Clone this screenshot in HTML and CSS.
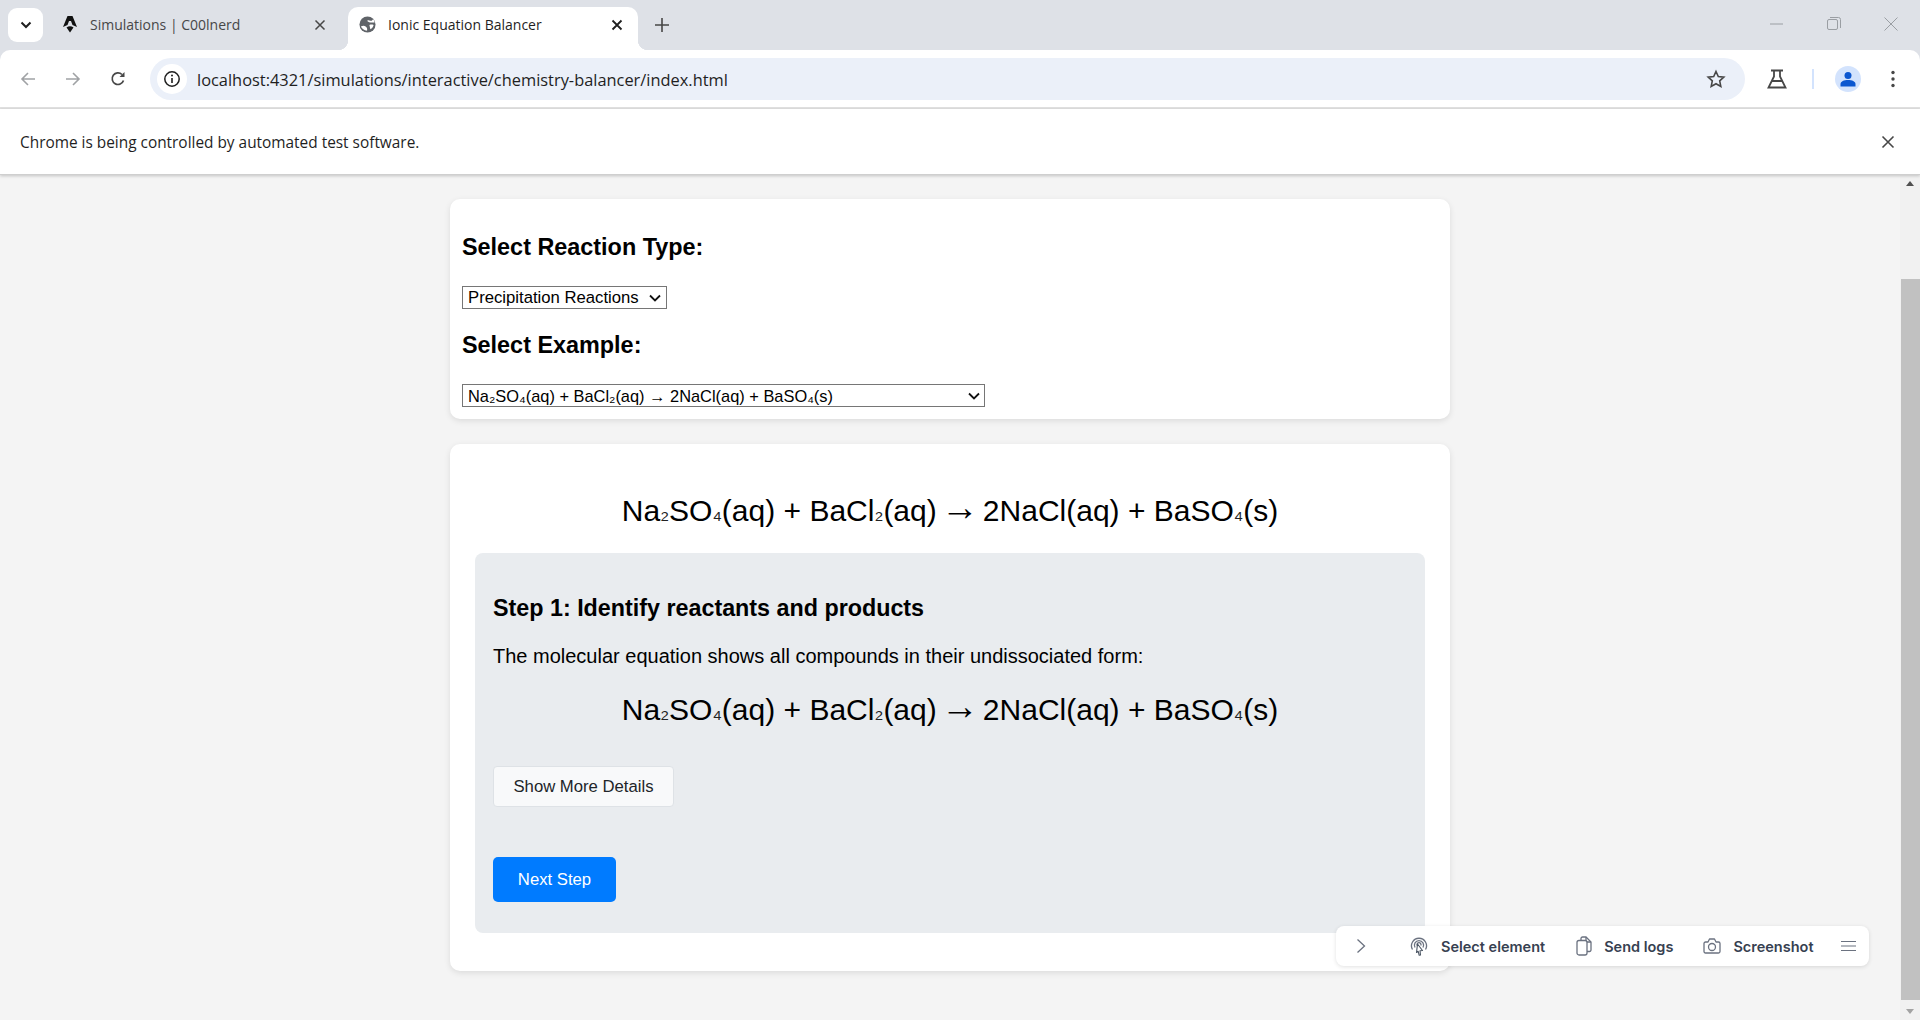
FILE: index.html
```html
<!DOCTYPE html>
<html lang="en">
<head>
  <meta charset="UTF-8">
  <title>Ionic Equation Balancer</title>
  <link rel="stylesheet" href="styles.css">
</head>
<body>
  <div class="tabstrip">
    <button class="tab-search">
      <svg width="12" height="12" viewBox="0 0 12 12"><path d="M1.500 3.500L6 8l4.500-4.500" fill="none" stroke="#1f1f1f" stroke-width="2"/></svg>
    </button>
    <div class="tab">
      <svg class="tab-icon" width="14" height="17" viewBox="0 0 14 17"><path d="M4.500 0h5L14 11 9.500 9l-1.500-4h-2L4.500 9 0 11z" fill="#111"/><path d="M3.500 11.500Q7 9 10.500 11.500L7 16.500z" fill="#111"/></svg>
      <span class="tab-title">Simulations | C00lnerd</span>
      <svg class="tab-close" width="12" height="12" viewBox="0 0 12 12"><path d="M1.500 1.500l9 9M10.500 1.500l-9 9" stroke="#474747" stroke-width="1.500"/></svg>
    </div>
    <div class="tab tab-active">
      <svg class="tab-icon" width="17" height="17" viewBox="0 0 18 18"><circle cx="9" cy="9" r="8.500" fill="#5f6368"/><path d="M9 4.500c2 0 3 1 4.500 .5l1.500-1.500c1 1 1.500 2.500 1.500 3.500H13c-1.500 0-3-.5-4-1.500zM2 11c2-1 3.500-1 5 0s2 2.500 1.500 4.500c-3-.5-5.500-2-6.500-4.500z" fill="#fff"/><path d="M11 9.500c1.500-.5 3-.5 4.500 0-.5 2-1.500 3.500-3.500 4.500z" fill="#fff"/></svg>
      <span class="tab-title">Ionic Equation Balancer</span>
      <svg class="tab-close" width="12" height="12" viewBox="0 0 12 12"><path d="M1.500 1.500l9 9M10.500 1.500l-9 9" stroke="#1f1f1f" stroke-width="1.800"/></svg>
    </div>
    <svg class="new-tab" width="14" height="14" viewBox="0 0 14 14"><path d="M7 0v14M0 7h14" stroke="#474747" stroke-width="1.600"/></svg>
    <div class="window-controls">
      <svg width="14" height="14" viewBox="0 0 14 14"><path d="M0 7h13" stroke="#9a9ea3" stroke-width="1"/></svg>
      <svg width="14" height="14" viewBox="0 0 14 14"><rect x="0.500" y="2.500" width="10" height="10" rx="1.500" fill="none" stroke="#9a9ea3"/><path d="M3 .5h8.500a2 2 0 0 1 2 2V11" fill="none" stroke="#9a9ea3"/></svg>
      <svg width="14" height="14" viewBox="0 0 14 14"><path d="M.5.500l13 13M13.500.500l-13 13" stroke="#9a9ea3" stroke-width="1"/></svg>
    </div>
  </div>

  <div class="toolbar">
    <svg class="nav-icon" width="16" height="16" viewBox="0 0 16 16"><path d="M15 8H2M8 2L2 8l6 6" fill="none" stroke="#a0a2a5" stroke-width="1.600"/></svg>
    <svg class="nav-icon" width="16" height="16" viewBox="0 0 16 16"><path d="M1 8h13M8 2l6 6-6 6" fill="none" stroke="#a0a2a5" stroke-width="1.600"/></svg>
    <svg class="nav-icon" width="16" height="16" viewBox="0 0 16 16"><path d="M13.500 9.500A5.800 5.800 0 1 1 12 3.500" fill="none" stroke="#474747" stroke-width="1.700"/><path d="M9.500 6H14.500V1z" fill="#474747"/></svg>
    <div class="omnibox">
      <span class="site-info">
        <svg width="18" height="18" viewBox="0 0 18 18"><circle cx="9" cy="9" r="7.200" fill="none" stroke="#1f1f1f" stroke-width="1.500"/><path d="M9 8v5" stroke="#1f1f1f" stroke-width="1.600"/><circle cx="9" cy="5.500" r="1" fill="#1f1f1f"/></svg>
      </span>
      <span class="url">localhost:4321/simulations/interactive/chemistry-balancer/index.html</span>
      <svg class="star" width="20" height="20" viewBox="0 0 20 20"><path d="M10 2.500l2.300 5.100 5.500.6-4.100 3.700 1.100 5.500L10 14.700l-4.800 2.700 1.100-5.500-4.100-3.700 5.500-.6z" fill="none" stroke="#474747" stroke-width="1.600"/></svg>
    </div>
    <svg class="flask" width="20" height="20" viewBox="0 0 20 20"><path d="M4 1.500h12M7 1.500v6L1.500 18.500h17L13 7.500v-6M5 12h10" fill="none" stroke="#474747" stroke-width="1.800"/></svg>
    <span class="toolbar-sep"></span>
    <span class="avatar">
      <svg width="16" height="16" viewBox="0 0 16 16"><circle cx="8" cy="4.500" r="3.500" fill="#0b57d0"/><path d="M.5 15.500v-2.500c0-2.500 3.500-4 7.500-4s7.500 1.500 7.500 4v2.500z" fill="#0b57d0"/></svg>
    </span>
    <svg class="kebab" width="4" height="18" viewBox="0 0 4 18"><circle cx="2" cy="2.500" r="1.700" fill="#474747"/><circle cx="2" cy="9" r="1.700" fill="#474747"/><circle cx="2" cy="15.500" r="1.700" fill="#474747"/></svg>
  </div>

  <div class="infobar">
    <span class="info-text">Chrome is being controlled by automated test software.</span>
    <svg width="14" height="14" viewBox="0 0 14 14"><path d="M1.500 1.500l11 11M12.500 1.500l-11 11" stroke="#474747" stroke-width="1.600"/></svg>
  </div>

  <div class="viewport">
    <main class="page">
      <section class="card controls">
        <h2>Select Reaction Type:</h2>
        <select class="type-select">
          <option>Precipitation Reactions</option>
        </select>
        <h2>Select Example:</h2>
        <select class="example-select">
          <option>Na₂SO₄(aq) + BaCl₂(aq) → 2NaCl(aq) + BaSO₄(s)</option>
        </select>
      </section>

      <section class="card equation-card">
        <div class="equation">Na<span class="sub">₂</span>SO<span class="sub">₄</span>(aq) + BaCl<span class="sub">₂</span>(aq)<span class="arrow"> → </span>2NaCl(aq) + BaSO<span class="sub">₄</span>(s)</div>
        <div class="step">
          <h3>Step 1: Identify reactants and products</h3>
          <p>The molecular equation shows all compounds in their undissociated form:</p>
          <div class="equation">Na<span class="sub">₂</span>SO<span class="sub">₄</span>(aq) + BaCl<span class="sub">₂</span>(aq)<span class="arrow"> → </span>2NaCl(aq) + BaSO<span class="sub">₄</span>(s)</div>
          <button class="details-btn">Show More Details</button>
          <button class="next-btn">Next Step</button>
        </div>
      </section>
    </main>

    <div class="scrollbar">
      <span class="arrow-up"></span>
      <div class="track"><div class="thumb"></div></div>
      <span class="arrow-down"></span>
    </div>

    <div class="dev-toolbar">
      <svg class="dev-toggle" width="10" height="16" viewBox="0 0 10 16"><path d="M1.500 1.500L8.500 8l-7 6.500" fill="none" stroke="#6b7280" stroke-width="1.300"/></svg>
      <span class="dev-item select-item">
        <svg width="20" height="20" viewBox="0 0 20 20"><path d="M3.500 13.500A7.500 7.500 0 1 1 16.500 13.500M6 11.500a4.600 4.600 0 1 1 8 0M8.200 9.500a2 2 0 1 1 3.600 0" fill="none" stroke="#6b7280" stroke-width="1.300"/><path d="M8.500 8l5 6.500-2.500.2L11.500 19l-1.300.3-1-4-1.700 1.200z" fill="#fff" stroke="#4b5563" stroke-width="1.100" stroke-linejoin="round"/></svg>
        Select element
      </span>
      <span class="dev-item logs-item">
        <svg width="16" height="20" viewBox="0 0 16 20"><path d="M5 4.500V2.500A1.500 1.500 0 0 1 6.500 1H10l5 5v8a1.500 1.500 0 0 1-1.500 1.500H11" fill="none" stroke="#6b7280" stroke-width="1.300"/><path d="M10 1v5h5" fill="none" stroke="#6b7280" stroke-width="1.300"/><rect x="1" y="4.500" width="10" height="14.500" rx="2" fill="#fff" stroke="#6b7280" stroke-width="1.300"/></svg>
        Send logs
      </span>
      <span class="dev-item shot-item">
        <svg width="18" height="16" viewBox="0 0 18 16"><path d="M2.500 4H5l1.500-3h5L13 4h2.500A1.500 1.500 0 0 1 17 5.500v8a1.500 1.500 0 0 1-1.500 1.500h-13A1.500 1.500 0 0 1 1 13.500v-8A1.500 1.500 0 0 1 2.500 4z" fill="none" stroke="#6b7280" stroke-width="1.300" stroke-linejoin="round"/><circle cx="9" cy="9" r="3.500" fill="none" stroke="#6b7280" stroke-width="1.300"/></svg>
        Screenshot
      </span>
      <svg class="dev-menu" width="15" height="12" viewBox="0 0 15 12"><path d="M0 1.500h15M0 6h15M0 10.500h15" stroke="#6b7280" stroke-width="1.200"/></svg>
    </div>
  </div>
</body>
</html>
```

FILE: styles.css
```css
* {
  box-sizing: border-box;
}

html, body {
  height: 100%;
  margin: 0;
  overflow: hidden;
}

body {
  display: flex;
  flex-direction: column;
  font-family: 'Liberation Sans', Arial, sans-serif;
  background: #dee1e7;
  color: #000;
}

/* browser chrome */
.tabstrip {
  height: 50px;
  flex: none;
  display: flex;
  align-items: flex-start;
  padding-left: 8px;
  font-family: 'Open Sans', sans-serif;
}

.tab-search {
  width: 35px;
  height: 34px;
  margin: 8px 5px 0 0;
  padding: 0;
  border: none;
  border-radius: 9px;
  background: #fff;
  display: flex;
  align-items: center;
  justify-content: center;
}

.tab {
  width: 293px;
  height: 43px;
  margin: 7px 7px 0 0;
  padding: 0 15px 8px 15px;
  display: flex;
  align-items: center;
  gap: 13px;
  font-size: 14px;
  color: #474747;
  flex: none;
}

.tab-active {
  width: 290px;
  margin-right: 0;
  padding-left: 11px;
  gap: 12px;
  background: #fff;
  border-radius: 10px 10px 0 0;
  color: #1f1f1f;
  position: relative;
}

.tab-active::before, .tab-active::after {
  content: "";
  position: absolute;
  bottom: 0;
  width: 10px;
  height: 10px;
}

.tab-active::before {
  left: -10px;
  background: radial-gradient(circle at 0 0, transparent 10px, #fff 10.5px);
}

.tab-active::after {
  right: -10px;
  background: radial-gradient(circle at 100% 0, transparent 10px, #fff 10.5px);
}

.tab-title {
  flex: 1;
  white-space: nowrap;
}

.new-tab {
  margin: 18px 0 0 17px;
}

.window-controls {
  margin-left: auto;
  margin-top: 17px;
  padding-right: 22px;
  display: flex;
  gap: 43px;
}

.toolbar {
  height: 59px;
  flex: none;
  display: flex;
  align-items: center;
  background: #fff;
  border-radius: 10px 10px 0 0;
  border-bottom: 2px solid #e1e1e1;
  padding-left: 20px;
}

.nav-icon {
  margin-right: 29px;
}

.nav-icon + .nav-icon + .nav-icon {
  margin-right: 24px;
}

.omnibox {
  width: 1595px;
  height: 42px;
  display: flex;
  align-items: center;
  background: #ebf0f9;
  border-radius: 21px;
  padding: 0 19px 0 7px;
}

.site-info {
  width: 30px;
  height: 30px;
  border-radius: 50%;
  background: #fff;
  display: flex;
  align-items: center;
  justify-content: center;
  margin-right: 10px;
}

.url {
  flex: 1;
  padding-top: 2px;
  font-family: 'Open Sans', sans-serif;
  font-size: 16.4px;
  color: #1f1f1f;
  white-space: nowrap;
}

.flask {
  margin-left: 22px;
}

.toolbar-sep {
  width: 2px;
  height: 20px;
  margin: 0 21px 0 25px;
  background: #d3e3fd;
}

.avatar {
  width: 26px;
  height: 26px;
  border-radius: 50%;
  background: #d3e3fd;
  display: flex;
  align-items: center;
  justify-content: center;
  margin-right: 30px;
}

.infobar {
  height: 66px;
  flex: none;
  display: flex;
  align-items: center;
  justify-content: space-between;
  padding: 0 25px 0 20px;
  background: #fff;
  border-bottom: 1px solid #cfcfcf;
  box-shadow: 0 1px 3px rgba(0, 0, 0, 0.2);
  font-family: 'Open Sans', sans-serif;
  font-size: 15.4px;
  color: #1f1f1f;
  position: relative;
  z-index: 2;
}

.info-text {
  padding-top: 2px;
}

/* page */
.viewport {
  flex: 1;
  min-height: 0;
  display: flex;
  position: relative;
  background: #f4f4f4;
}

.page {
  flex: 1;
  padding-top: 24px;
}

.card {
  width: 1000px;
  margin: 0 auto 25px;
  padding: 12px;
  background: #fff;
  border-radius: 10px;
  box-shadow: 0 2px 6px rgba(0, 0, 0, 0.1);
}

.controls {
  height: 220px;
}

h2 {
  font-size: 23.4px;
  line-height: 27px;
  font-weight: bold;
  margin: 23px 0 25px;
}

select {
  display: block;
  height: 23px;
  padding: 0 0 0 5px;
  appearance: none;
  font-family: 'Liberation Sans', Arial, sans-serif;
  font-size: 16.7px;
  background: #fff url("data:image/svg+xml,%3Csvg xmlns='http://www.w3.org/2000/svg' width='12' height='8'%3E%3Cpath d='M1 1.500l5 5 5-5' fill='none' stroke='%23111' stroke-width='1.800'/%3E%3C/svg%3E") no-repeat right 5px center;
  color: #000;
  border: 1px solid #767676;
  border-radius: 0;
}

.type-select {
  width: 205px;
}

.example-select {
  width: 523px;
  font-size: 16.4px;
  background-position: right 4px center;
}

.equation-card {
  padding: 25px;
  height: 527px;
}

.equation {
  font-size: 30px;
  line-height: 37px;
  text-align: center;
}

.sub {
  font-size: 23px;
  line-height: 0;
  vertical-align: 2px;
  color: #222;
}

.arrow {
  font-size: 38px;
  line-height: 0;
  word-spacing: -6.500px;
  vertical-align: 1px;
}

.equation-card > .equation {
  margin: 23px 0 24px;
}

.step {
  height: 380px;
  padding: 18px;
  background: #e9ecef;
  border-radius: 8px;
}

h3 {
  font-size: 23.3px;
  line-height: 27px;
  font-weight: bold;
  margin: 24px 0 23px;
}

.step p {
  font-size: 20px;
  line-height: 23px;
  margin: 0 0 23px;
}

.details-btn {
  display: block;
  width: 181px;
  height: 41px;
  margin: 38px 0 50px;
  padding: 0;
  background: #f8f9fa;
  border: 1px solid #dee2e6;
  border-radius: 4px;
  font-family: 'Liberation Sans', Arial, sans-serif;
  font-size: 16.7px;
  color: #212529;
}

.next-btn {
  display: block;
  width: 123px;
  height: 45px;
  padding: 0;
  background: #007bff;
  border: none;
  border-radius: 5px;
  font-family: 'Liberation Sans', Arial, sans-serif;
  font-size: 16.7px;
  color: #fff;
}

/* scrollbar */
.scrollbar {
  width: 20px;
  flex: none;
  display: flex;
  flex-direction: column;
  background: #f1f1f1;
}

.arrow-up, .arrow-down {
  height: 17px;
  flex: none;
  display: flex;
  align-items: center;
  justify-content: center;
}

.arrow-up::before {
  content: "";
  border: 4px solid transparent;
  border-top: none;
  border-bottom: 5px solid #505050;
}

.arrow-down::before {
  content: "";
  border: 4px solid transparent;
  border-bottom: none;
  border-top: 5px solid #a3a3a3;
}

.track {
  flex: 1;
  padding: 87px 0 0 1px;
}

.thumb {
  height: 721px;
  background: #c1c1c1;
}

/* floating dev toolbar */
.dev-toolbar {
  position: absolute;
  left: 1336px;
  top: 751px;
  width: 533px;
  height: 40px;
  padding: 0 13px 0 20px;
  display: flex;
  align-items: center;
  background: #fff;
  border-radius: 8px;
  box-shadow: 0 1px 4px rgba(0, 0, 0, 0.12);
  font-family: Inter, sans-serif;
  font-size: 14.500px;
  font-weight: 600;
  color: #374151;
}

.dev-item {
  display: flex;
  align-items: center;
  gap: 12px;
  white-space: nowrap;
}

.select-item {
  margin-left: 43px;
}

.logs-item {
  margin-left: 31px;
}

.shot-item {
  margin-left: 30px;
}

.dev-menu {
  margin-left: auto;
}
```
